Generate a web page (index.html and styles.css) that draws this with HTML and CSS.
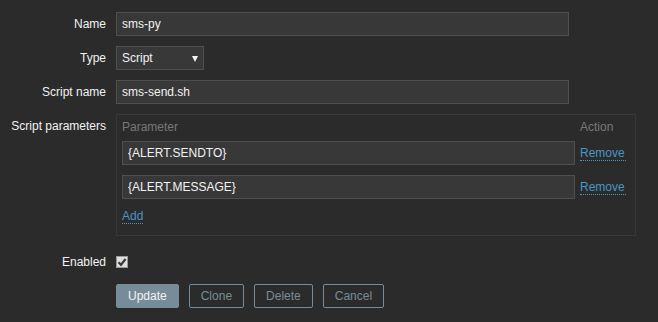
FILE: index.html
```html
<!DOCTYPE html>
<html lang="en">
<head>
    <meta charset="UTF-8">
    <title>Media type</title>
    <link rel="stylesheet" href="styles.css">
</head>
<body>
    <form class="form">
        <div class="row">
            <label class="label">Name</label>
            <div class="field"><input class="input" type="text" value="sms-py"></div>
        </div>
        <div class="row">
            <label class="label">Type</label>
            <div class="field">
                <div class="select">Script<span class="arrow"></span></div>
            </div>
        </div>
        <div class="row">
            <label class="label">Script name</label>
            <div class="field"><input class="input" type="text" value="sms-send.sh"></div>
        </div>
        <div class="row">
            <label class="label">Script parameters</label>
            <div class="field">
                <div class="params">
                    <div class="th">Parameter</div>
                    <div class="th">Action</div>
                    <input class="input" type="text" value="{ALERT.SENDTO}">
                    <a href="#" class="link">Remove</a>
                    <input class="input" type="text" value="{ALERT.MESSAGE}">
                    <a href="#" class="link">Remove</a>
                    <div class="add"><a href="#" class="link">Add</a></div>
                </div>
            </div>
        </div>
        <div class="row enabled">
            <label class="label">Enabled</label>
            <div class="field">
                <span class="check">
                    <svg width="10" height="10" viewBox="0 0 10 10"><path d="M1.5 5.2 L4 7.8 L8.6 2" fill="none" stroke="#3a3a3a" stroke-width="2.2"/></svg>
                </span>
            </div>
        </div>
        <div class="row">
            <div class="label"></div>
            <div class="buttons">
                <button type="button" class="btn main">Update</button>
                <button type="button" class="btn alt">Clone</button>
                <button type="button" class="btn alt">Delete</button>
                <button type="button" class="btn alt">Cancel</button>
            </div>
        </div>
    </form>
</body>
</html>
```

FILE: styles.css
```css
* {
    margin: 0;
    padding: 0;
    box-sizing: border-box;
}
body {
    background-color: #2b2b2b;
    color: #f2f2f2;
    font-family: "Liberation Sans", Arial, sans-serif;
    font-size: 12px;
}
.form {
    display: flex;
    flex-direction: column;
    gap: 10px;
    padding-top: 12px;
}
.row {
    display: flex;
    gap: 10px;
}
.label {
    width: 106px;
    text-align: right;
    line-height: 24px;
    flex-shrink: 0;
}
.input {
    width: 453px;
    height: 24px;
    background-color: #383838;
    border: 1px solid #4f4f4f;
    color: #f2f2f2;
    font-family: inherit;
    font-size: 12px;
    padding: 0 5px;
    outline: none;
}
.select {
    width: 88px;
    height: 24px;
    background-color: #383838;
    border: 1px solid #4f4f4f;
    padding: 0 5px;
    line-height: 22px;
    position: relative;
}
.arrow {
    position: absolute;
    right: 5px;
    top: 9px;
    border-left: 3px solid transparent;
    border-right: 3px solid transparent;
    border-top: 6px solid #f2f2f2;
}
.params {
    width: 520px;
    border: 1px solid #383838;
    padding: 4px 9px 4px 5px;
    display: grid;
    grid-template-columns: 453px auto;
    column-gap: 5px;
    row-gap: 10px;
    align-items: center;
}
.th {
    color: #787878;
    line-height: 17px;
    margin-bottom: -5px;
}
.link {
    color: #4796c4;
    text-decoration: none;
    border-bottom: 1px dotted #4796c4;
    line-height: 14px;
}
.add {
    grid-column: 1 / 3;
    padding-bottom: 8px;
    line-height: 14px;
}
.enabled {
    margin-top: 4px;
}
.enabled .field {
    display: flex;
    align-items: center;
}
.check {
    width: 12px;
    height: 12px;
    background-color: #dedede;
    border: 1px solid #9a9a9a;
    display: flex;
    align-items: center;
    justify-content: center;
}
.buttons {
    display: flex;
    gap: 10px;
}
.btn {
    height: 24px;
    padding: 0 11px;
    font-family: inherit;
    font-size: 12px;
    border: 1px solid #768d99;
    border-radius: 2px;
    cursor: pointer;
}
.main {
    background-color: #768d99;
    color: #f2f2f2;
}
.alt {
    background-color: #2b2b2b;
    color: #768d99;
}
```
